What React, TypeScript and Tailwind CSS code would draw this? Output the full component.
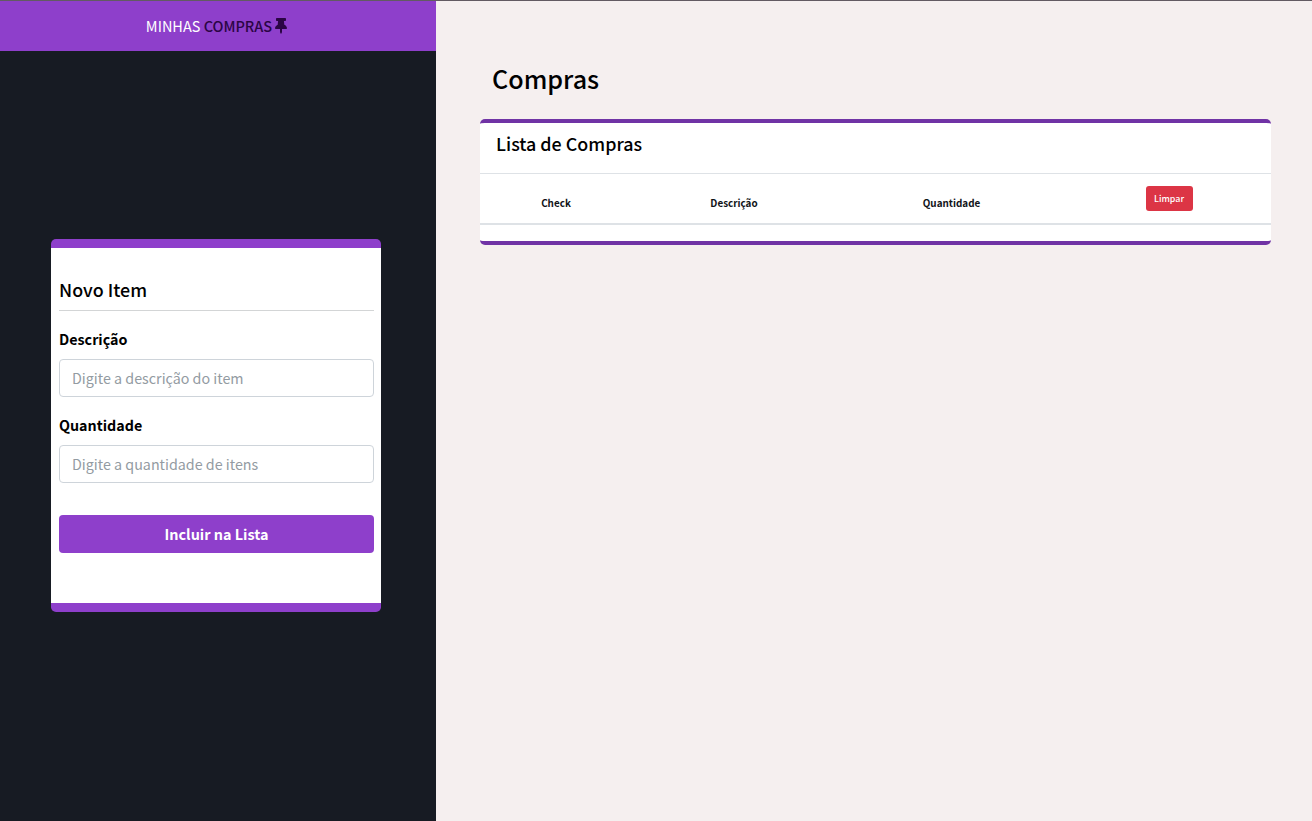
import { FaThumbtack } from "react-icons/fa";

const columns = [
  { label: "Check", width: "w-[152px]" },
  { label: "Descrição", width: "w-[204px]" },
  { label: "Quantidade", width: "w-[231px]" },
];

function Field({ id, label, placeholder }: { id: string; label: string; placeholder: string }) {
  return (
    <div className="mb-4 flex flex-col">
      <label htmlFor={id} className="mb-2 text-[14.3px] leading-6 font-bold text-black">
        {label}
      </label>
      <input
        id={id}
        placeholder={placeholder}
        className="h-[38px] w-full rounded border border-[#ced4da] bg-white px-3 pb-px text-[14.3px] leading-6 placeholder:text-[#939ba2] placeholder:opacity-100"
      />
    </div>
  );
}

function Sidebar() {
  return (
    <aside className="flex w-[436px] shrink-0 flex-col bg-[#171b23]">
      <header className="flex h-[50px] items-center justify-center bg-[#8e3fcb] pr-[3px] text-[14.5px] leading-6 text-white">
        <span className="whitespace-pre">MINHAS </span>
        <span className="font-medium text-[#2b0545]">COMPRAS</span>
        <FaThumbtack className="mb-px ml-[3px] h-4 w-3 text-[#2b0545]" />
      </header>
      <form className="mt-[188px] ml-[51px] h-[373px] w-[330px] rounded-[5px] border-y-[9px] border-[#8e3fcb] bg-white pt-[29px] pr-[7px] pl-2">
        <h2 className="mb-4 h-[34px] border-b border-[#d3d5d6] text-[17.9px] leading-6 font-medium text-black">
          Novo Item
        </h2>
        <Field id="description" label="Descrição" placeholder="Digite a descrição do item" />
        <Field id="quantity" label="Quantidade" placeholder="Digite a quantidade de itens" />
        <button
          type="button"
          className="mt-4 h-[38px] w-full rounded bg-[#8e3fcb] text-[14.4px] leading-6 font-bold text-white"
        >
          Incluir na Lista
        </button>
      </form>
    </aside>
  );
}

function ShoppingList() {
  return (
    <section className="h-[126px] w-[791px] rounded-[5px] border-y-4 border-[#7033a5] bg-white">
      <h2 className="h-[51px] border-b border-[#dee2e6] pt-2 pl-4 text-[17.9px] leading-6 font-medium text-black">
        Lista de Compras
      </h2>
      <div className="flex h-[51px] border-b-2 border-[#dee2e6] text-[9.9px] leading-4 font-bold text-[#111418]">
        {columns.map((column) => (
          <div key={column.label} className={`${column.width} pt-[21px] text-center`}>
            {column.label}
          </div>
        ))}
        <div className="flex flex-1 justify-center pt-3">
          <button type="button" className="h-[25px] w-[47px] rounded-[3px] bg-[#dc3545] text-[8.9px] leading-4 font-medium text-white">
            Limpar
          </button>
        </div>
      </div>
    </section>
  );
}

export default function App() {
  return (
    <div className="flex h-[821px] w-[1312px] overflow-hidden border-t border-[#625a62] bg-[#f5efef] font-['Noto_Sans_CJK_SC','Noto_Sans_CJK_JP',sans-serif]">
      <Sidebar />
      <main className="pt-[59px] pl-11">
        <h1 className="mb-[22px] ml-3 text-[25.1px] leading-[37px] font-medium text-black">Compras</h1>
        <ShoppingList />
      </main>
    </div>
  );
}
